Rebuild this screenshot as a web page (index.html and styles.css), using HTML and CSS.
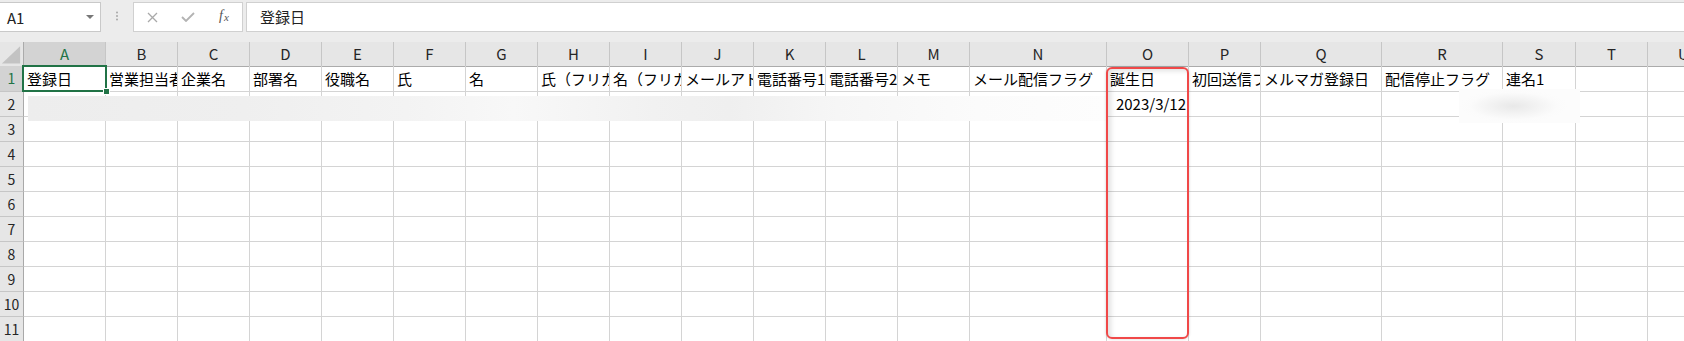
FILE: index.html
```html
<!DOCTYPE html>
<html lang="ja">
<head>
<meta charset="utf-8">
<title>Sheet</title>
<link rel="stylesheet" href="styles.css">
</head>
<body>
<div class="app">
  <div class="formula-bar">
    <div class="name-box"><span class="name-text">A1</span><span class="name-arrow"></span></div>
    <div class="grip">
      <svg width="4" height="12" viewBox="0 0 4 12"><circle cx="2" cy="1.5" r="1" fill="#a8a8a8"/><circle cx="2" cy="5" r="1" fill="#a8a8a8"/><circle cx="2" cy="8.5" r="1" fill="#a8a8a8"/></svg>
    </div>
    <div class="fx-buttons">
      <span class="fx-slot">
        <svg width="11" height="11" viewBox="0 0 11 11"><path d="M1 1 L10 10 M10 1 L1 10" stroke="#a9a9a9" stroke-width="1.3" fill="none"/></svg>
      </span>
      <span class="fx-slot">
        <svg width="14" height="10" viewBox="0 0 14 10"><path d="M1 5 L5 9 L13 1" stroke="#b3b3b3" stroke-width="1.8" fill="none"/></svg>
      </span>
      <span class="fx-slot fx"><i>f</i><i class="fx-x">x</i></span>
    </div>
    <div class="formula-input">登録日</div>
  </div>

  <div class="sheet">
    <div class="row hdr">
      <div class="corner"><svg width="24" height="24" viewBox="0 0 24 24"><polygon points="2,22 21,22 21,4" fill="#c3c3c3"/></svg></div>
      <div class="ch sel-h">A</div><div class="ch">B</div><div class="ch">C</div><div class="ch">D</div><div class="ch">E</div><div class="ch">F</div><div class="ch">G</div><div class="ch">H</div><div class="ch">I</div><div class="ch">J</div><div class="ch">K</div><div class="ch">L</div><div class="ch">M</div><div class="ch">N</div><div class="ch">O</div><div class="ch">P</div><div class="ch">Q</div><div class="ch">R</div><div class="ch">S</div><div class="ch">T</div><div class="ch">U</div>
    </div>
    <div class="row r1">
      <div class="rh sel-h">1</div>
      <div class="c">登録日</div><div class="c">営業担当者</div><div class="c">企業名</div><div class="c">部署名</div><div class="c">役職名</div><div class="c">氏</div><div class="c">名</div><div class="c">氏（フリガナ）</div><div class="c">名（フリガナ）</div><div class="c">メールアドレス</div><div class="c">電話番号1</div><div class="c">電話番号2</div><div class="c">メモ</div><div class="c">メール配信フラグ</div><div class="c">誕生日</div><div class="c">初回送信フラグ</div><div class="c">メルマガ登録日</div><div class="c">配信停止フラグ</div><div class="c">連名1</div><div class="c"></div><div class="c"></div>
    </div>
    <div class="row">
      <div class="rh">2</div>
      <div class="c"></div><div class="c"></div><div class="c"></div><div class="c"></div><div class="c"></div><div class="c"></div><div class="c"></div><div class="c"></div><div class="c"></div><div class="c"></div><div class="c"></div><div class="c"></div><div class="c"></div><div class="c"></div><div class="c num">2023/3/12</div><div class="c"></div><div class="c"></div><div class="c"></div><div class="c"></div><div class="c"></div><div class="c"></div>
    </div>
    <div class="row">
      <div class="rh">3</div>
      <div class="c"></div><div class="c"></div><div class="c"></div><div class="c"></div><div class="c"></div><div class="c"></div><div class="c"></div><div class="c"></div><div class="c"></div><div class="c"></div><div class="c"></div><div class="c"></div><div class="c"></div><div class="c"></div><div class="c"></div><div class="c"></div><div class="c"></div><div class="c"></div><div class="c"></div><div class="c"></div><div class="c"></div>
    </div>
    <div class="row">
      <div class="rh">4</div>
      <div class="c"></div><div class="c"></div><div class="c"></div><div class="c"></div><div class="c"></div><div class="c"></div><div class="c"></div><div class="c"></div><div class="c"></div><div class="c"></div><div class="c"></div><div class="c"></div><div class="c"></div><div class="c"></div><div class="c"></div><div class="c"></div><div class="c"></div><div class="c"></div><div class="c"></div><div class="c"></div><div class="c"></div>
    </div>
    <div class="row">
      <div class="rh">5</div>
      <div class="c"></div><div class="c"></div><div class="c"></div><div class="c"></div><div class="c"></div><div class="c"></div><div class="c"></div><div class="c"></div><div class="c"></div><div class="c"></div><div class="c"></div><div class="c"></div><div class="c"></div><div class="c"></div><div class="c"></div><div class="c"></div><div class="c"></div><div class="c"></div><div class="c"></div><div class="c"></div><div class="c"></div>
    </div>
    <div class="row">
      <div class="rh">6</div>
      <div class="c"></div><div class="c"></div><div class="c"></div><div class="c"></div><div class="c"></div><div class="c"></div><div class="c"></div><div class="c"></div><div class="c"></div><div class="c"></div><div class="c"></div><div class="c"></div><div class="c"></div><div class="c"></div><div class="c"></div><div class="c"></div><div class="c"></div><div class="c"></div><div class="c"></div><div class="c"></div><div class="c"></div>
    </div>
    <div class="row">
      <div class="rh">7</div>
      <div class="c"></div><div class="c"></div><div class="c"></div><div class="c"></div><div class="c"></div><div class="c"></div><div class="c"></div><div class="c"></div><div class="c"></div><div class="c"></div><div class="c"></div><div class="c"></div><div class="c"></div><div class="c"></div><div class="c"></div><div class="c"></div><div class="c"></div><div class="c"></div><div class="c"></div><div class="c"></div><div class="c"></div>
    </div>
    <div class="row">
      <div class="rh">8</div>
      <div class="c"></div><div class="c"></div><div class="c"></div><div class="c"></div><div class="c"></div><div class="c"></div><div class="c"></div><div class="c"></div><div class="c"></div><div class="c"></div><div class="c"></div><div class="c"></div><div class="c"></div><div class="c"></div><div class="c"></div><div class="c"></div><div class="c"></div><div class="c"></div><div class="c"></div><div class="c"></div><div class="c"></div>
    </div>
    <div class="row">
      <div class="rh">9</div>
      <div class="c"></div><div class="c"></div><div class="c"></div><div class="c"></div><div class="c"></div><div class="c"></div><div class="c"></div><div class="c"></div><div class="c"></div><div class="c"></div><div class="c"></div><div class="c"></div><div class="c"></div><div class="c"></div><div class="c"></div><div class="c"></div><div class="c"></div><div class="c"></div><div class="c"></div><div class="c"></div><div class="c"></div>
    </div>
    <div class="row">
      <div class="rh">10</div>
      <div class="c"></div><div class="c"></div><div class="c"></div><div class="c"></div><div class="c"></div><div class="c"></div><div class="c"></div><div class="c"></div><div class="c"></div><div class="c"></div><div class="c"></div><div class="c"></div><div class="c"></div><div class="c"></div><div class="c"></div><div class="c"></div><div class="c"></div><div class="c"></div><div class="c"></div><div class="c"></div><div class="c"></div>
    </div>
    <div class="row">
      <div class="rh">11</div>
      <div class="c"></div><div class="c"></div><div class="c"></div><div class="c"></div><div class="c"></div><div class="c"></div><div class="c"></div><div class="c"></div><div class="c"></div><div class="c"></div><div class="c"></div><div class="c"></div><div class="c"></div><div class="c"></div><div class="c"></div><div class="c"></div><div class="c"></div><div class="c"></div><div class="c"></div><div class="c"></div><div class="c"></div>
    </div>

    <div class="blur-row"></div>
    <div class="blur-s"></div>
    <div class="selection"><span class="handle"></span></div>
    <div class="mark"></div>
  </div>
</div>
</body>
</html>
```

FILE: styles.css
```css
* {
  box-sizing: border-box;
  margin: 0;
  padding: 0;
}

html, body {
  width: 1684px;
  height: 341px;
  overflow: hidden;
  background: #ffffff;
}

body {
  font-family: "Noto Sans CJK JP", "Noto Sans", sans-serif;
  color: #000;
}

.app {
  display: flex;
  flex-direction: column;
  width: 1720px;
}

/* ---------- formula bar ---------- */
.formula-bar {
  height: 42px;
  background: #ececec;
  display: flex;
  align-items: flex-start;
  padding-top: 2px;
}

.name-box {
  width: 101px;
  height: 30px;
  background: #fff;
  border: 1px solid #c9c9c9;
  border-left: none;
  display: flex;
  align-items: center;
  justify-content: space-between;
  padding: 0 6px 0 7px;
  font-size: 15px;
  color: #222;
}

.name-arrow {
  width: 0;
  height: 0;
  border-left: 4px solid transparent;
  border-right: 4px solid transparent;
  border-top: 4px solid #777;
}

.grip {
  width: 32px;
  height: 30px;
  display: flex;
  justify-content: center;
  padding-top: 9px;
}

.fx-buttons {
  width: 110px;
  height: 30px;
  background: #fff;
  border: 1px solid #d0d0d0;
  display: flex;
  align-items: center;
}

.fx-slot {
  width: 36px;
  height: 28px;
  display: flex;
  align-items: center;
  justify-content: center;
}

.fx {
  font-family: "Liberation Serif", "DejaVu Serif", serif;
  font-size: 14px;
  color: #555;
  padding-bottom: 3px;
}

.fx-x {
  font-size: 11px;
  margin-left: 1px;
  position: relative;
  top: 1px;
}

.formula-input {
  margin-left: 3px;
  flex: 1;
  height: 30px;
  background: #fff;
  border: 1px solid #d0d0d0;
  border-right: none;
  padding-left: 13px;
  font-size: 15px;
  line-height: 28px;
  color: #222;
}

/* ---------- sheet ---------- */
.sheet {
  position: relative;
  width: 1720px;
}

.row {
  display: grid;
  grid-template-columns: 24px 82px repeat(12, 72px) 137px 82px 72px 121px 121px 73px 72px 72px;
  height: 25px;
}

.row.hdr {
  height: 24px;
  background: #e6e6e6;
}

.row.r1 {
  height: 26px;
}

.corner {
  background: #e6e6e6;
  border-right: 1px solid #ababab;
  border-bottom: 1px solid #ababab;
  display: flex;
}

.ch {
  border-right: 1px solid #c6c6c6;
  border-bottom: 1px solid #ababab;
  text-align: center;
  font-size: 15px;
  line-height: 23px;
  color: #262626;
}

.rh {
  background: #e6e6e6;
  border-right: 1px solid #a9a9a9;
  border-bottom: 1px solid #c6c6c6;
  text-align: center;
  font-size: 14px;
  line-height: 24px;
  color: #262626;
}

.sel-h {
  background: #d3d3d3;
  color: #217346;
}

.c {
  border-right: 1px solid #d4d4d4;
  border-bottom: 1px solid #d4d4d4;
  overflow: hidden;
  white-space: nowrap;
  font-size: 15px;
  line-height: 24px;
  padding-left: 3px;
}

.r1 .c,
.r1 .rh {
  line-height: 25px;
}

.c.num {
  text-align: right;
  padding-left: 0;
  padding-right: 2px;
}

/* ---------- overlays ---------- */
.blur-row {
  position: absolute;
  left: 28px;
  top: 54px;
  width: 1079px;
  height: 25px;
  background: linear-gradient(90deg, #ededed 0%, #efefef 20%, #f3f3f3 35%, #f8f8f8 45%, #f1f1f1 58%, #efefef 65%, #f6f6f6 75%, #fbfbfb 88%, #fdfdfd 100%);
}

.blur-s {
  position: absolute;
  left: 1459px;
  top: 47px;
  width: 121px;
  height: 34px;
  background: radial-gradient(ellipse 45% 50% at 45% 50%, #e8e8e8 0%, #f3f3f3 45%, #fbfbfb 80%, #fcfcfc 100%);
}

.selection {
  position: absolute;
  left: 22px;
  top: 23px;
  width: 85px;
  height: 27px;
  border: 2px solid #217346;
}

.handle {
  position: absolute;
  right: -5px;
  bottom: -5px;
  width: 7px;
  height: 7px;
  background: #217346;
  border: 1px solid #fff;
}

.mark {
  position: absolute;
  left: 1106px;
  top: 25px;
  width: 83px;
  height: 272px;
  border: 2px solid #f04848;
  border-radius: 6px;
  box-shadow: inset 3px 2px 5px rgba(0, 0, 0, 0.12), 0 0 3px rgba(0, 0, 0, 0.18);
}
```
